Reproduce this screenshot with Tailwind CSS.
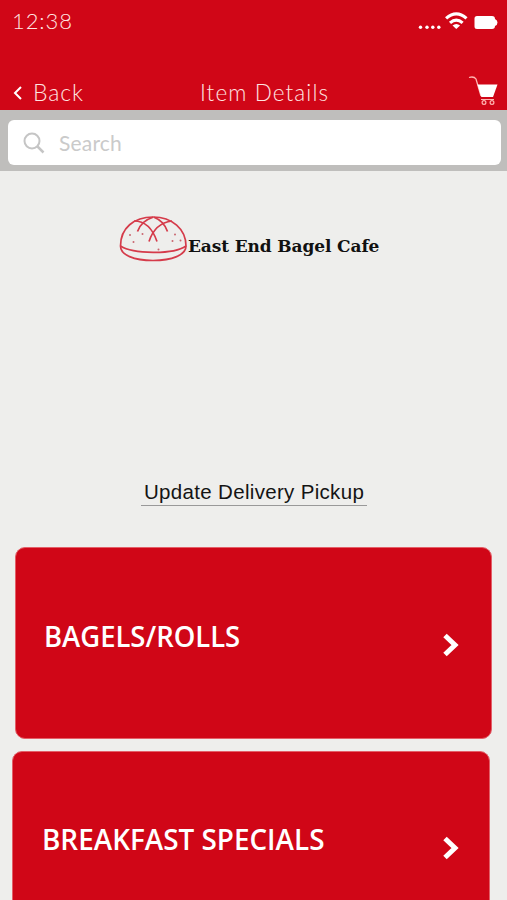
<!DOCTYPE html>
<html lang="en">
<head>
<meta charset="utf-8">
<title>Item Details</title>
<script src="https://cdn.jsdelivr.net/npm/@tailwindcss/browser@4"></script>
</head>
<body class="h-[900px] w-[507px] overflow-hidden bg-[#eeeeec] font-['Lato',sans-serif]">
<header class="flex h-[110px] flex-col justify-between bg-[#d00617] text-[#ffe4e1]">
  <div class="flex h-[42px] items-center justify-between pl-3 pr-[9px]">
    <span class="text-[22px] font-light leading-none tracking-[0.9px]">12:38</span>
    <svg class="h-[20px] w-[80px]" viewBox="0 0 80 20" fill="none">
      <g fill="#fff"><circle cx="2.5" cy="16.2" r="1.7"/><circle cx="9" cy="16.2" r="1.7"/><circle cx="14.8" cy="16.2" r="1.7"/><circle cx="20.8" cy="16.2" r="1.7"/></g>
      <g stroke="#fff" stroke-width="3.2"><path d="M28.100 7.400Q38.300 -1.500 48.500 7.400"/><path d="M32 11.900Q38.300 6.400 44.600 11.900"/></g>
      <path d="M38.300 18L34.500 14.600Q38.300 11.600 42.100 14.600Z" fill="#fff"/>
      <path d="M59 5H74Q77 5 77 8Q79.500 9 79.500 11.500Q79.500 14 77 15Q77 18 74 18H59Q56.500 18 56.500 15.500V7.500Q56.500 5 59 5Z" fill="#fff"/>
    </svg>
  </div>
  <div class="grid h-[38px] grid-cols-[200px_1fr_40px] items-center">
    <div class="flex items-center gap-[10px] pl-[13px] pt-[3px]">
      <svg class="h-[14px] w-[10px]" viewBox="0 0 10 14" fill="none" stroke="#fff" stroke-width="2"><path d="M8 1L2 7L8 13"/></svg>
      <span class="text-[23px] font-light leading-none tracking-[0.9px]">Back</span>
    </div>
    <h1 class="pt-[4px] text-[22.500px] font-light leading-none tracking-[1.1px]">Item Details</h1>
    <svg class="-mt-[2px] h-[32px] w-[32px]" viewBox="0 0 32 32" fill="none">
      <path d="M2 3.500Q7 2 9 5L14 22" stroke="#ffb5b1" stroke-width="1.300"/>
      <path d="M10.500 10.500H30.500L26 23H14.300Z" fill="#fff"/>
      <path d="M14 25.500H27" stroke="#ffb5b1" stroke-width="1"/>
      <circle cx="17" cy="28.500" r="1.900" stroke="#ffb5b1" stroke-width="1.200"/><circle cx="25" cy="28.500" r="1.900" stroke="#ffb5b1" stroke-width="1.200"/>
    </svg>
  </div>
</header>
<div class="h-[61px] bg-[#bfbebc] pb-[6px] pl-2 pr-[6px] pt-[10px]">
  <div class="flex h-[45px] items-center gap-[14px] rounded-md bg-white pl-[15px]">
    <svg class="h-[22px] w-[22px]" viewBox="0 0 22 22" fill="none" stroke="#c5c5c5" stroke-width="2"><circle cx="9" cy="9" r="7.500"/><path d="M14.500 14.500L20.500 20.500" stroke-width="2.500"/></svg>
    <span class="text-[21px] leading-none tracking-[0.200px] text-[#cacaca]">Search</span>
  </div>
</div>
<main>
  <div class="flex h-[309px] pl-[119px] pt-[45px]">
    <svg class="h-[46px] w-[69px] shrink-0" viewBox="0 0 69 46" fill="none" stroke="#d53b4a" stroke-width="1.700">
      <path d="M1.500 30C1.500 12 15 1 34 1S67 13 67 30C67 39 53 44.500 34 44.500S1.500 39 1.500 30Z"/>
      <path d="M1.500 30C14 38 54 39 67 30"/>
      <path d="M18.500 15.500Q22 5 34 1.200M15 5Q31 5 38 25.500M30 25.500Q36 7 53 5M35 1.200Q45 5 48.500 15.500"/>
      <g fill="#c96670" stroke="none"><circle cx="11" cy="19" r="1"/><circle cx="23.500" cy="18" r="1"/><circle cx="14.500" cy="26" r="1"/><circle cx="56" cy="18.500" r="1"/><circle cx="53.500" cy="25" r="1"/><circle cx="61.500" cy="24.500" r="1"/><circle cx="39.500" cy="33.500" r="1"/></g>
    </svg>
    <span class="mt-[18px] whitespace-nowrap font-['DejaVu_Serif',serif] text-[17px] font-bold leading-[24px] tracking-[-0.120px] text-[#111]">East End Bagel Cafe</span>
  </div>
  <div class="flex h-[67px] items-start pl-[141px]">
    <a class="h-[26px] w-[226px] whitespace-nowrap border-b border-[#999] pl-[3px] font-['Liberation_Sans',sans-serif] text-[20.500px] leading-[24px] tracking-[0.320px] text-[#141414]">Update Delivery Pickup</a>
  </div>
  <section class="ml-[15px] flex h-[192px] w-[477px] items-center justify-between rounded-[10px] border border-[#e35f68] bg-[#d00617] pl-[28px] pr-[31px]">
    <h2 class="origin-left -translate-y-[7px] scale-x-[0.98] whitespace-nowrap font-['Open_Sans',sans-serif] text-[28px] font-semibold leading-none text-white">BAGELS/ROLLS</h2>
    <svg class="mt-[4px] h-[26px] w-[18px] shrink-0" viewBox="0 0 18 26" fill="none" stroke="#fff" stroke-width="5"><path d="M3 3.500L13 13L3 22.500"/></svg>
  </section>
  <section class="ml-[12px] mt-[12px] flex h-[193px] w-[478px] items-center justify-between rounded-[10px] border border-[#e35f68] bg-[#d00617] pl-[29px] pr-[29px]">
    <h2 class="origin-left -translate-y-[9px] scale-x-[0.995] whitespace-nowrap font-['Open_Sans',sans-serif] text-[28px] font-semibold leading-none text-white">BREAKFAST SPECIALS</h2>
    <svg class="h-[26px] w-[18px] shrink-0" viewBox="0 0 18 26" fill="none" stroke="#fff" stroke-width="5"><path d="M3 3.500L13 13L3 22.500"/></svg>
  </section>
</main>
</body>
</html>
